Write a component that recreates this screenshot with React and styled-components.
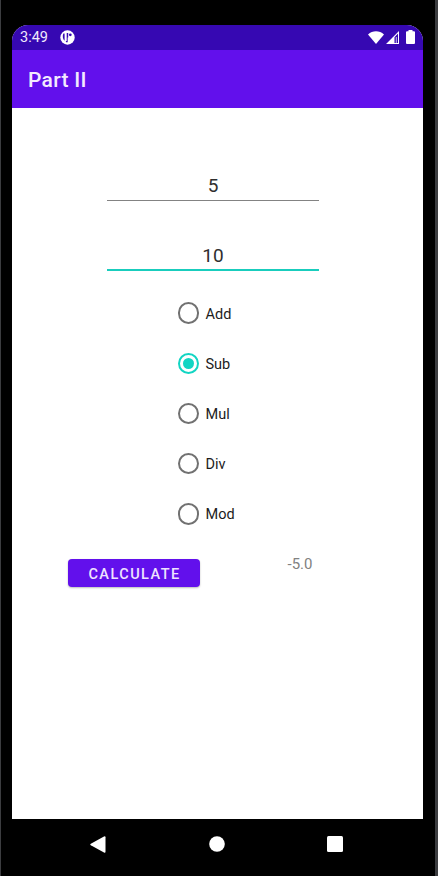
import React, { useState } from "react";
import styled, { createGlobalStyle } from "styled-components";

const GlobalStyle = createGlobalStyle`
  * { box-sizing: border-box; }
  body { margin: 0; background: #000; font-family: Roboto, sans-serif; }
`;

const Device = styled.main`
  width: 438px;
  height: 876px;
  padding: 24.5px 12.5px 0 10.5px;
  background: #000;
  border: solid #3c3d40;
  border-width: 0 3px 0 1px;
  overflow: hidden;
`;

const Screen = styled.div`
  display: flex;
  flex-direction: column;
  height: 794.5px;
  background: #fff;
  border-radius: 16px 16px 0 0;
  overflow: hidden;
`;

const StatusBar = styled.header`
  display: flex;
  align-items: center;
  height: 25.5px;
  flex: none;
  padding: 0 8px 0 8.5px;
  background: #3608b2;
  color: #f0eafc;
`;

const Clock = styled.span`
  width: 39.5px;
  padding-top: 1px;
  font-size: 14.5px;
  line-height: 20px;
`;

const StatusIcon = styled.svg`
  display: block;
  flex: none;
  width: ${(p) => p.$w}px;
  height: ${(p) => p.$h}px;
  margin-left: ${(p) => p.$gap || 0}px;
  fill: #fff;
`;

const Spacer = styled.div`
  flex: 1;
`;

const AppBar = styled.div`
  display: flex;
  align-items: center;
  flex: none;
  height: 58px;
  padding: 2px 16.5px 0;
  background: #6210ec;
`;

const Title = styled.h1`
  margin: 0;
  color: #f3eafe;
  font-size: 21px;
  font-weight: 500;
  letter-spacing: 0.3px;
  line-height: 28px;
`;

const Form = styled.form`
  display: flex;
  flex-direction: column;
  padding-top: 64px;
`;

const NumberField = styled.input`
  width: 212px;
  height: ${(p) => (p.$active ? 31 : 29)}px;
  margin: 0 0 ${(p) => (p.$active ? 17 : 39)}px 95.5px;
  padding: ${(p) => (p.$active ? "1px 0 0" : "0 0 1px")};
  border: 0;
  border-bottom: ${(p) => (p.$active ? "2px solid #19cdbd" : "1px solid #838383")};
  border-radius: 0;
  outline: 0;
  background: transparent;
  color: #2f2f2f;
  font: 400 19px/27px Roboto, sans-serif;
  text-align: center;
`;

const Choices = styled.div`
  display: flex;
  flex-direction: column;
  padding-left: 166px;
`;

const Choice = styled.label`
  display: flex;
  align-items: center;
  gap: 6.5px;
  height: 50.2px;
  color: #1c1c1c;
  font-size: 14.5px;
`;

const ChoiceText = styled.span`
  padding-top: 2px;
`;

const Radio = styled.input`
  appearance: none;
  display: grid;
  place-items: center;
  width: 21.5px;
  height: 21.5px;
  margin: 0;
  border: 2px solid #717171;
  border-radius: 50%;

  &:checked { border-color: #12d5c3; }
  &:checked::before {
    content: "";
    width: 11px;
    height: 11px;
    border-radius: 50%;
    background: #12d5c3;
  }
`;

const ResultRow = styled.div`
  display: flex;
  align-items: flex-start;
  padding: 20px 0 0 56.5px;
`;

const CalculateButton = styled.button`
  width: 132px;
  height: 28px;
  padding: 4px 0 0 1px;
  border: 0;
  border-radius: 4px;
  background: #6210ec;
  box-shadow: 0 1px 2px #0004;
  color: #eee3fe;
  font: 500 14.5px/20px Roboto, sans-serif;
  letter-spacing: 1.45px;
`;

const Result = styled.output`
  margin: -5px 0 0 87.5px;
  color: #818181;
  font-size: 15px;
  line-height: 20px;
`;

const NavigationBar = styled.nav`
  display: flex;
  align-items: center;
  justify-content: space-between;
  height: 50.5px;
  padding: 0 79.5px 0 78.5px;
`;

const NavButton = styled.button`
  display: block;
  width: 16px;
  height: 16px;
  padding: 0;
  border: 0;
  background: none;
  svg { display: block; fill: #fff; }
`;

const operations = {
  Add: (a, b) => a + b,
  Sub: (a, b) => a - b,
  Mul: (a, b) => a * b,
  Div: (a, b) => a / b,
  Mod: (a, b) => a % b,
};

export default function App() {
  const [first, setFirst] = useState("5");
  const [second, setSecond] = useState("10");
  const [operation, setOperation] = useState("Sub");
  const [result, setResult] = useState("-5.0");

  function calculate(event) {
    event.preventDefault();
    const value = operations[operation](Number(first), Number(second));
    setResult(Number.isInteger(value) ? value.toFixed(1) : String(value));
  }

  return (
    <>
      <GlobalStyle />
      <Device>
        <Screen>
          <StatusBar>
            <Clock>3:49</Clock>
            <StatusIcon $w={15} $h={15} viewBox="0 0 15 15">
              <circle cx="7.5" cy="7.5" r="7.2" />
              <path fill="#3608b2" d="M3.4 3.5h1.2v7.300C2.600 9.300 2.300 5.500 3.400 3.500zM6.700 3h1.500v4.500H7.700v4.700H5.900V11h.8z" />
              <circle cx="10.3" cy="4.8" r="1.4" fill="#3608b2" />
            </StatusIcon>
            <Spacer />
            <StatusIcon $w={16} $h={13} viewBox="0 0 16 13">
              <path d="M0 3.5C4.5-.7 11.5-.7 16 3.5L8 13z" />
            </StatusIcon>
            <StatusIcon $w={13} $h={13} $gap={2} viewBox="0 0 13 13">
              <path fillRule="evenodd" d="M0 13 13 0v13zM8.5 6.2V12H12V2.6z" />
              <path fill="#a899dc" d="M9.7 6H11v6H9.7z" />
            </StatusIcon>
            <StatusIcon $w={9} $h={14} $gap={7} viewBox="0 0 9 14">
              <path d="M2.5 0h4v1.3H8q1 0 1 1V13q0 1-1 1H1q-1 0-1-1V2.3q0-1 1-1h1.5z" />
            </StatusIcon>
          </StatusBar>
          <AppBar><Title>Part II</Title></AppBar>
          <Form onSubmit={calculate}>
            <NumberField aria-label="First number" value={first} onChange={(e) => setFirst(e.target.value)} />
            <NumberField $active aria-label="Second number" value={second} onChange={(e) => setSecond(e.target.value)} />
            <Choices>
              {Object.keys(operations).map((name) => (
                <Choice key={name}>
                  <Radio type="radio" name="operation" checked={operation === name} onChange={() => setOperation(name)} />
                  <ChoiceText>{name}</ChoiceText>
                </Choice>
              ))}
            </Choices>
            <ResultRow>
              <CalculateButton type="submit">CALCULATE</CalculateButton>
              <Result>{result}</Result>
            </ResultRow>
          </Form>
        </Screen>
        <NavigationBar>
          <NavButton aria-label="Back">
            <svg width="16" height="17" viewBox="0 0 16 17"><path d="M.8 7.7 14 .4Q15.5-.2 15.5 1.2v14.6q0 1.4-1.5.8L.8 9.3Q-.3 8.5.8 7.7z" /></svg>
          </NavButton>
          <NavButton aria-label="Home">
            <svg width="16" height="16" viewBox="0 0 16 16"><circle cx="8" cy="8" r="7.8" /></svg>
          </NavButton>
          <NavButton aria-label="Overview">
            <svg width="16" height="16" viewBox="0 0 16 16"><rect width="16" height="16" rx="1.5" /></svg>
          </NavButton>
        </NavigationBar>
      </Device>
    </>
  );
}
